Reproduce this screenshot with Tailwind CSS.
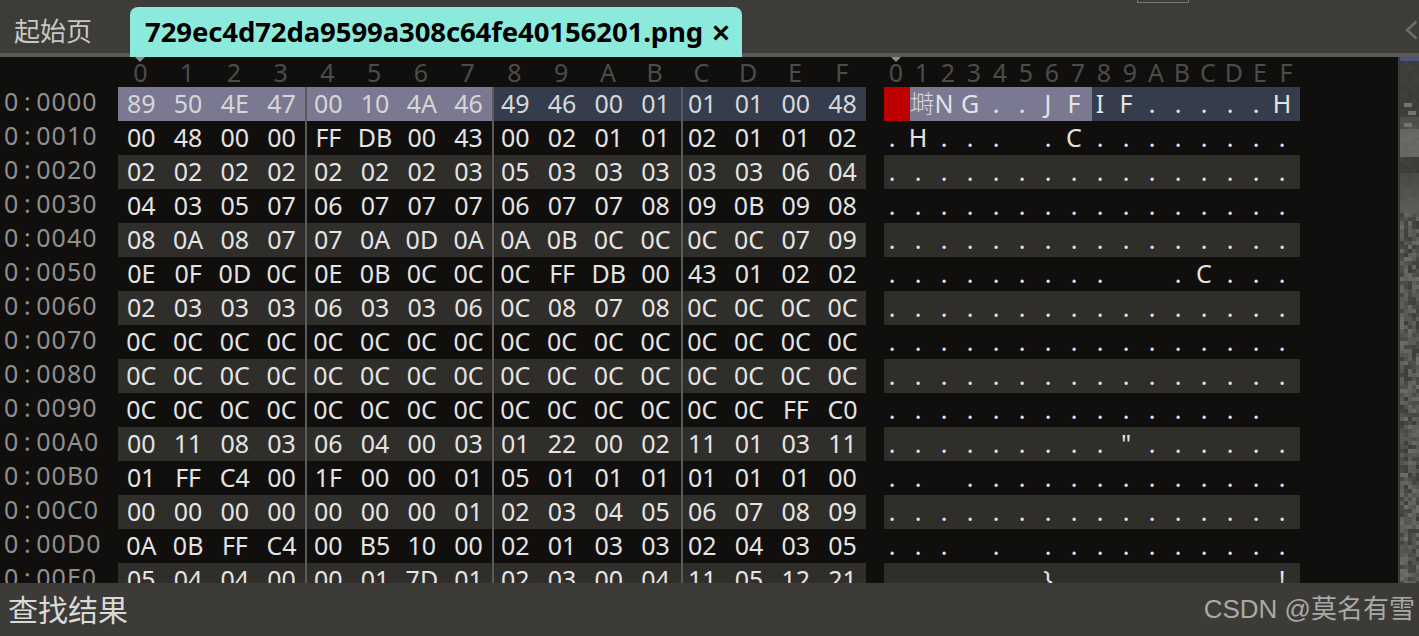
<!DOCTYPE html>
<html lang="en">
<head>
    <meta charset="UTF-8">
    <title>Hex Editor</title>
    <script src="https://cdn.jsdelivr.net/npm/@tailwindcss/browser@4"></script>
</head>
<body class="w-[1419px] h-[636px] overflow-hidden flex flex-col bg-[#100f0e] font-['Noto_Sans','Noto_Sans_CJK_SC',sans-serif]">
    <!-- Tab bar -->
    <div class="relative h-[57px] shrink-0 flex items-end bg-[#3d3c38] border-b-4 border-[#5b5a58]">
        <div class="w-[130px] h-[53px] pl-[14px] text-[26px] leading-[60px] text-[#c8c8c6] font-['Noto_Sans_CJK_SC',sans-serif]">起始页</div>
        <div class="h-[50px] -mb-1 w-[612px] pl-[15px] flex items-center rounded-t-lg bg-[#8ceadc] text-black">
            <span class="text-[27.5px] font-bold leading-[48px] tracking-[-0.1px]">729ec4d72da9599a308c64fe40156201.png</span>
            <span class="ml-[8px] text-[34px] font-semibold leading-[48px]">×</span>
        </div>
        <div class="absolute left-[1137px] top-0 w-[52px] h-[3px] border-x border-b border-[#77776f]"></div>
        <svg class="absolute left-[1404px] top-[20px]" width="14" height="20" viewBox="0 0 14 20" fill="none"><path d="M12.5 1.5 L3 10 L12.5 18.5" stroke="#6f6e6b" stroke-width="2.4"/></svg>
    </div>

    <!-- Hex view -->
    <div class="relative flex-1 min-h-0 overflow-hidden">
        <div id="hex" class="w-[1398px]"></div>
        <div class="absolute left-[305px] top-[30px] bottom-0 w-[2px] bg-[#5a5a58]"></div>
        <div class="absolute left-[492px] top-[30px] bottom-0 w-[2px] bg-[#5a5a58]"></div>
        <div class="absolute left-[681px] top-[30px] bottom-0 w-[2px] bg-[#5a5a58]"></div>
        <div class="absolute left-[135px] top-0 w-0 h-0 border-x-[5px] border-x-transparent border-t-[5px] border-t-[#8d8d8b]"></div>
        <div class="absolute left-[891px] top-0 w-0 h-0 border-x-[5px] border-x-transparent border-t-[5px] border-t-[#8d8d8b]"></div>
        <svg id="minimap" class="absolute left-[1398px] top-0" width="21" height="526"></svg>
    </div>

    <!-- Bottom panel -->
    <div class="h-[53px] shrink-0 flex items-center justify-between bg-[#3c3b38] font-['Noto_Sans_CJK_SC',sans-serif]">
        <span class="pl-[8px] -mt-[2px] text-[30px] text-[#d9d9d7]">查找结果</span>
        <span class="pr-[4px] text-[26px] text-[#a9a9a7] font-['Liberation_Sans','Noto_Sans_CJK_SC',sans-serif]">CSDN @莫名有雪</span>
    </div>

    <script>
        const rows = [
            ['0:0000', '89 50 4E 47 00 10 4A 46 49 46 00 01 01 01 00 48', ' 塒NG..JFIF.....H'],
            ['0:0010', '00 48 00 00 FF DB 00 43 00 02 01 01 02 01 01 02', '.H... .C........'],
            ['0:0020', '02 02 02 02 02 02 02 03 05 03 03 03 03 03 06 04', '................'],
            ['0:0030', '04 03 05 07 06 07 07 07 06 07 07 08 09 0B 09 08', '................'],
            ['0:0040', '08 0A 08 07 07 0A 0D 0A 0A 0B 0C 0C 0C 0C 07 09', '................'],
            ['0:0050', '0E 0F 0D 0C 0E 0B 0C 0C 0C FF DB 00 43 01 02 02', '.........  .C...'],
            ['0:0060', '02 03 03 03 06 03 03 06 0C 08 07 08 0C 0C 0C 0C', '................'],
            ['0:0070', '0C 0C 0C 0C 0C 0C 0C 0C 0C 0C 0C 0C 0C 0C 0C 0C', '................'],
            ['0:0080', '0C 0C 0C 0C 0C 0C 0C 0C 0C 0C 0C 0C 0C 0C 0C 0C', '................'],
            ['0:0090', '0C 0C 0C 0C 0C 0C 0C 0C 0C 0C 0C 0C 0C 0C FF C0', '............... '],
            ['0:00A0', '00 11 08 03 06 04 00 03 01 22 00 02 11 01 03 11', '.........".......'],
            ['0:00B0', '01 FF C4 00 1F 00 00 01 05 01 01 01 01 01 01 00', '.. .............'],
            ['0:00C0', '00 00 00 00 00 00 00 01 02 03 04 05 06 07 08 09', '................'],
            ['0:00D0', '0A 0B FF C4 00 B5 10 00 02 01 03 03 02 04 03 05', '... . ..........'],
            ['0:00E0', '05 04 04 00 00 01 7D 01 02 03 00 04 11 05 12 21', '......}........!'],
        ];

        let html = '<div class="h-[30px] flex text-[25px] leading-[30px] text-[#4c4c4a]">'
            + '<div class="w-[117px]"></div><div class="w-[748px] flex">';
        '0123456789ABCDEF'.split('').forEach(c => {
            html += `<span class="w-[46.75px] text-center">${c}</span>`;
        });
        html += '</div><div class="w-[18px]"></div><div class="flex">';
        '0123456789ABCDEF'.split('').forEach(c => {
            html += `<span class="w-[26px] text-center">${c}</span>`;
        });
        html += '</div></div>';

        rows.forEach((row, i) => {
            const bytes = row[1].split(' ');
            const striped = i % 2 == 0 && i > 0;
            html += '<div class="h-[34px] flex text-[25px] leading-[32px]">';
            html += `<div class="w-[118px] pl-[4px] -mt-[2px] text-[#8f8f8d] tracking-[1px]">0<span class="inline-block w-[17px] text-center">:</span>${row[0].slice(2)}</div>`;

            // hex cells
            html += `<div class="w-[748px] flex ${striped ? 'bg-[#2f2e2b]' : ''}">`;
            bytes.forEach((b, n) => {
                let bg = '';
                if (i == 0) bg = n < 8 ? 'bg-[#7b7891] text-[#d6d6d8]' : 'bg-[#353c4b] text-[#d6d8dc]';
                else bg = 'text-[#e4e4e4]';
                html += `<span class="w-[46.75px] text-center ${bg}">${b}</span>`;
            });
            html += '</div>';

            // text column
            html += '<div class="w-[18px]"></div>';
            html += `<div class="relative w-[416px] flex ${striped ? 'bg-[#2f2e2b]' : ''}">`;
            if (i == 0) {
                html += '<div class="absolute left-0 top-0 h-full w-[26px] bg-[#bd0000]"></div>'
                    + '<div class="absolute left-[26px] top-0 h-full w-[182px] bg-[#7b7891]"></div>'
                    + '<div class="absolute left-[208px] top-0 h-full w-[208px] bg-[#353c4b]"></div>';
            }
            html += '<div class="relative -ml-[5px] flex">';
            Array.from(row[2]).slice(0, 16).forEach(c => {
                if (c == '塒') html += '<span class="w-[26px] text-center text-[#d6d6d8] font-light translate-x-[4px]">塒</span>';
                else html += `<span class="w-[26px] text-center text-[#e4e4e4]">${c == ' ' ? '&nbsp;' : c}</span>`;
            });
            html += '</div></div></div>';
        });
        document.getElementById('hex').innerHTML = html;

        // minimap: blocky noise, brighter toward the bottom
        let seed = 7;
        const rand = () => { seed = (seed * 16807) % 2147483647; return seed / 2147483647; };
        let rects = '<rect width="21" height="526" fill="#3b3b39"/>';
        for (let y = 4; y < 526; y += 4) {
            for (let x = 2; x < 21; x += 4) {
                let v = 58 + rand() * 6;
                if (y >= 60 && y < 72) v = 76 + rand() * 6;
                else if (y >= 72 && y < 100) v = 100 + rand() * 6;
                else if (y >= 116 && y < 156) v = 70 + (y - 116) / 2 + rand() * 6;
                else if (y >= 156) v = 60 + rand() * 50;
                v = Math.round(v);
                rects += `<rect x="${x}" y="${y}" width="4" height="4" fill="rgb(${v},${v},${v - 3})"/>`;
            }
        }
        rects += '<rect x="2" width="19" height="4" fill="#4d5380"/>'
            + '<rect x="6" y="46" width="8" height="4" fill="#74736f"/><rect x="10" y="54" width="8" height="4" fill="#74736f"/><rect x="6" y="66" width="8" height="4" fill="#74736f"/>';
        document.getElementById('minimap').innerHTML = rects;
    </script>
</body>
</html>
